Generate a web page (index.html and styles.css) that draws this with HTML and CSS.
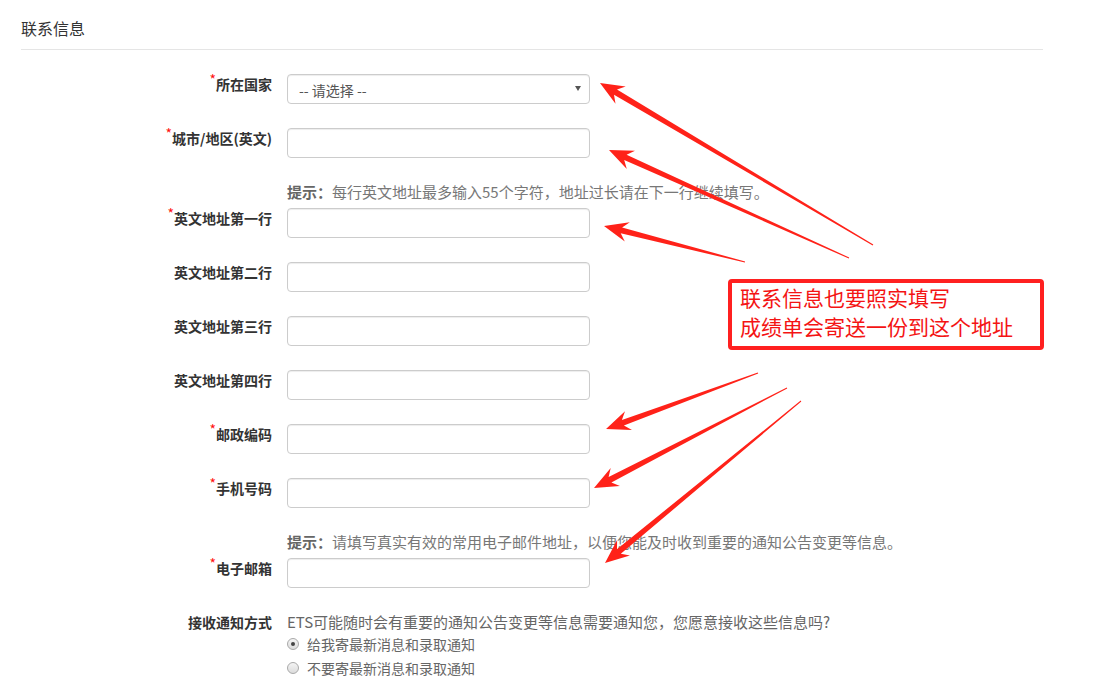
FILE: index.html
```html
<!DOCTYPE html>
<html lang="zh-CN">
<head>
<meta charset="utf-8">
<title>联系信息</title>
<link rel="stylesheet" href="styles.css">
</head>
<body>
<div class="page">
  <h2 class="section-title">联系信息</h2>
  <div class="form">
    <div class="row">
      <label class="lbl"><span class="req">*</span>所在国家</label>
      <div class="field select"><span>-- 请选择 --</span><span class="caret"></span></div>
    </div>
    <div class="row">
      <label class="lbl"><span class="req">*</span>城市/地区(英文)</label>
      <div class="field"></div>
    </div>
    <div class="hint-row">
      <div class="hint"><b>提示：</b>每行英文地址最多输入55个字符，地址过长请在下一行继续填写。</div>
    </div>
    <div class="row">
      <label class="lbl"><span class="req">*</span>英文地址第一行</label>
      <div class="field"></div>
    </div>
    <div class="row">
      <label class="lbl">英文地址第二行</label>
      <div class="field"></div>
    </div>
    <div class="row">
      <label class="lbl">英文地址第三行</label>
      <div class="field"></div>
    </div>
    <div class="row">
      <label class="lbl">英文地址第四行</label>
      <div class="field"></div>
    </div>
    <div class="row">
      <label class="lbl"><span class="req">*</span>邮政编码</label>
      <div class="field"></div>
    </div>
    <div class="row">
      <label class="lbl"><span class="req">*</span>手机号码</label>
      <div class="field"></div>
    </div>
    <div class="hint-row">
      <div class="hint"><b>提示：</b>请填写真实有效的常用电子邮件地址，以便您能及时收到重要的通知公告变更等信息。</div>
    </div>
    <div class="row">
      <label class="lbl"><span class="req">*</span>电子邮箱</label>
      <div class="field"></div>
    </div>
    <div class="row notify">
      <label class="lbl">接收通知方式</label>
      <div class="notify-body">
        <div class="notify-text">ETS可能随时会有重要的通知公告变更等信息需要通知您，您愿意接收这些信息吗?</div>
        <div class="radio"><span class="dot checked"></span>给我寄最新消息和录取通知</div>
        <div class="radio"><span class="dot"></span>不要寄最新消息和录取通知</div>
      </div>
    </div>
  </div>

  <div class="note">联系信息也要照实填写<br>成绩单会寄送一份到这个地址</div>

  <svg class="arrows" width="1094" height="694" viewBox="0 0 1094 694">
    <g fill="#ff2219">
      <polygon points="873.3,244.6 617.0,89.6 625.7,86.6 600,83 615.5,103.8 614.0,94.8 872.7,245.4"/>
      <polygon points="849.2,257.5 626.6,154.7 635.0,150.7 609,150 626.8,168.9 624.2,160.1 848.8,258.5"/>
      <polygon points="745.1,261.5 622.1,227.5 629.8,222.2 604,226 624.8,241.6 620.7,233.3 744.9,262.5"/>
      <polygon points="757.8,372.5 621.9,420.0 625.0,411.3 606,429 632.0,430.1 623.9,425.6 758.2,373.5"/>
      <polygon points="786.8,387.6 608.6,477.0 610.7,468.1 594,488 619.9,485.9 611.4,482.4 787.2,388.4"/>
      <polygon points="800.7,400.6 617.0,549.2 617.1,540.0 605,563 629.9,555.4 620.8,553.8 801.3,401.4"/>
    </g>
  </svg>
</div>
</body>
</html>
```

FILE: styles.css
```css
* { box-sizing: border-box; }

html, body {
  margin: 0;
  padding: 0;
  background: #ffffff;
}

body {
  font-family: "Microsoft YaHei", "Noto Sans CJK SC", "Noto Sans", sans-serif;
  color: #333;
}

.page {
  position: relative;
  width: 1094px;
  height: 694px;
  padding-left: 21px;
  overflow: hidden;
}

.section-title {
  margin: 0 0 24px 0;
  width: 1022px;
  padding: 17px 0 10px 0;
  font-size: 16px;
  line-height: 22px;
  font-weight: normal;
  color: #333;
  border-bottom: 1px solid #e5e5e5;
}

.form {
  display: flex;
  flex-direction: column;
}

.row {
  display: flex;
  align-items: flex-start;
  gap: 15px;
  margin-bottom: 24px;
}

.lbl {
  width: 251px;
  flex: none;
  text-align: right;
  font-size: 14px;
  line-height: 20px;
  padding-top: 0;
  font-weight: bold;
  color: #333;
}

.req {
  color: #ff1010;
  font-weight: normal;
  font-size: 14px;
  line-height: 14px;
  vertical-align: top;
  position: relative;
  top: -2px;
  margin-right: 0;
}

.field {
  width: 303px;
  height: 30px;
  flex: none;
  border: 1px solid #cccccc;
  border-radius: 4px;
  background: #fff;
  box-shadow: inset 0 1px 1px rgba(0, 0, 0, 0.075);
}

.select {
  display: flex;
  align-items: center;
  justify-content: space-between;
  padding: 1px 8px 0 11px;
  font-size: 14px;
  color: #555;
}

.caret {
  width: 0;
  height: 0;
  border-left: 3px solid transparent;
  border-right: 3px solid transparent;
  border-top: 5px solid #555;
  margin-top: -3px;
}

.hint-row {
  padding-left: 266px;
  margin-bottom: 6px;
}

.hint {
  font-size: 15px;
  line-height: 20px;
  color: #777;
  white-space: nowrap;
}

.hint b {
  font-weight: bold;
  color: #666;
}

.notify .lbl {
  padding-top: 0;
}

.notify-body {
  display: flex;
  flex-direction: column;
}

.notify-text {
  font-size: 15px;
  line-height: 20px;
  color: #666;
  white-space: nowrap;
}

.radio {
  display: flex;
  align-items: center;
  gap: 8px;
  height: 24px;
  font-size: 14px;
  color: #666;
}

.dot {
  width: 12px;
  height: 12px;
  border-radius: 50%;
  border: 1px solid #a9a9a9;
  background: linear-gradient(#f4f4f4, #dcdcdc);
  display: flex;
  align-items: center;
  justify-content: center;
  flex: none;
}

.dot.checked::after {
  content: "";
  width: 4px;
  height: 4px;
  border-radius: 50%;
  background: #444;
}

.note {
  position: absolute;
  left: 728px;
  top: 279px;
  width: 316px;
  height: 71px;
  border: 4px solid #ff2020;
  border-radius: 4px;
  padding: 0 0 0 8px;
  font-size: 21px;
  line-height: 29px;
  color: #f41414;
  background: #fff;
  white-space: nowrap;
}

.arrows {
  position: absolute;
  left: 0;
  top: 0;
  pointer-events: none;
}
```
